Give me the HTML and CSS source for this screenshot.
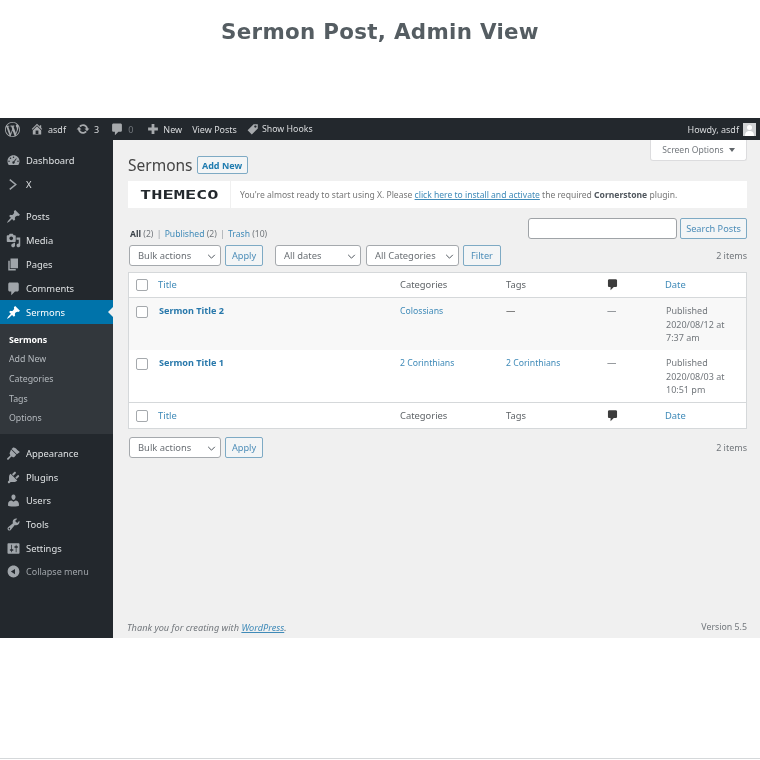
FILE: index.html
```html
<!DOCTYPE html>
<html lang="en">
<head>
<meta charset="utf-8">
<title>Sermon Post, Admin View</title>
<link rel="stylesheet" href="styles.css">
</head>
<body>
<h1 class="heading">Sermon Post, Admin View</h1>
<div class="shot">
  <header class="adminbar">
    <svg class="ab-wp" viewBox="0 0 20 20"><path fill-rule="evenodd" d="M20 10c0-5.510-4.490-10-10-10C4.480 0 0 4.490 0 10c0 5.520 4.480 10 10 10 5.510 0 10-4.480 10-10zM7.780 15.370L4.370 6.220c.55-.02 1.170-.08 1.170-.08.5-.06.44-1.130-.06-1.110 0 0-1.450.11-2.370.11-.18 0-.37 0-.58-.01C4.120 2.690 6.870 1.070 10 1.070c2.330 0 4.450.87 6.050 2.340-.68-.11-1.650.39-1.650 1.580 0 .74.45 1.360.9 2.100.35.61.55 1.360.55 2.460 0 1.490-1.400 5-1.400 5l-3.030-8.370c.54-.02.82-.17.82-.17.5-.05.44-1.250-.06-1.220 0 0-1.440.12-2.380.12-.87 0-2.330-.12-2.330-.12-.5-.03-.56 1.200-.06 1.220l.92.080 1.260 3.410zM17.410 10c.24-.64.74-1.870.43-4.250.7 1.290 1.050 2.710 1.050 4.250 0 3.290-1.730 6.240-4.480 7.830 1-2.670 2-5.390 3-7.830zM6.100 18.090C3.120 16.650 1.110 13.530 1.110 10c0-1.300.23-2.480.72-3.590C3.250 10.300 4.670 14.200 6.100 18.090zm4.030-6.630l2.580 6.980c-.86.290-1.740.450-2.710.450-.82 0-1.620-.12-2.370-.35.84-2.380 1.670-4.750 2.500-7.080z"/></svg>
    <span class="ab-item"><svg class="ab-ico" viewBox="0 0 20 20"><path fill-rule="evenodd" d="M16 8.500l1.530 1.530-1.060 1.060L10 4.620l-6.470 6.470-1.060-1.060L10 2.500l4 4v-2h2v4zm-6-2.460l6 5.990V18H4v-5.970zM12 17v-5H8v5h4z"/></svg>asdf</span>
    <span class="ab-item ab-updates"><svg class="ab-ico" viewBox="0 0 20 20"><path d="M10.200 3.280c3.530 0 6.430 2.610 6.900 6h2.080l-3.500 4-3.500-4h2.320c-.45-1.970-2.210-3.440-4.300-3.440-1.450 0-2.730.71-3.540 1.790L4.620 5.870C5.890 4.280 7.920 3.280 10.200 3.280zm-.4 13.440c-3.520 0-6.430-2.610-6.890-6H.82l3.500-4c1.170 1.330 2.330 2.670 3.500 4H5.500c.45 1.970 2.210 3.440 4.300 3.440 1.450 0 2.730-.71 3.540-1.790l1.990 1.980c-1.270 1.590-3.300 2.590-5.530 2.590z"/></svg>3</span>
    <span class="ab-item ab-dim"><svg class="ab-ico" viewBox="0 0 20 20"><path d="M5 2h10c1.100 0 2 .9 2 2v8c0 1.100-.9 2-2 2h-3l-5 5v-5H5c-1.100 0-2-.9-2-2V4c0-1.100.9-2 2-2z"/></svg>0</span>
    <span class="ab-item ab-new"><svg class="ab-ico" viewBox="0 0 20 20"><path d="M17 8v4h-5v5H8v-5H3V8h5V3h4v5h5z"/></svg>New</span>
    <span class="ab-item ab-view">View Posts</span>
    <span class="ab-item ab-hooks"><svg class="ab-ico" viewBox="0 0 20 20"><path fill-rule="evenodd" d="M11 2h7v7L8 19l-7-7zm3 6c1.100 0 2-.9 2-2s-.9-2-2-2-2 .9-2 2 .9 2 2 2z"/></svg>Show Hooks</span>
    <span class="ab-right">Howdy, asdf<span class="avatar"><svg viewBox="0 0 13 13"><circle cx="6.500" cy="4.500" r="2.500"/><path d="M2 13c0-4 2-5 4.500-5S11 9 11 13z"/></svg></span></span>
  </header>
  <div class="wrap">
    <nav class="menu">
      <a class="mi"><svg class="mi-ico" viewBox="0 0 20 20"><path fill-rule="evenodd" d="M3.760 16h12.480c1.100-1.430 1.760-3.210 1.760-5.140C18 6.200 14.420 3 10 3s-8 3.200-8 7.860c0 1.930.66 3.710 1.760 5.140zM10 4.500a1 1 0 1 1 0 2 1 1 0 0 1 0-2zM6 6a1 1 0 1 1 0 2 1 1 0 0 1 0-2zm7.500 1l.8.6-2.900 4.200a1.600 1.600 0 1 1-1-.7zM4 10a1 1 0 1 1 0 2 1 1 0 0 1 0-2zm12 0a1 1 0 1 1 0 2 1 1 0 0 1 0-2z"/></svg>Dashboard</a>
      <a class="mi"><svg class="mi-ico" viewBox="0 0 20 20"><path class="mi-chevron" d="M5 3.500l8 6.500-8 6.500"/></svg>X</a>
      <a class="mi sep"><svg class="mi-ico" viewBox="0 0 20 20"><path d="M10.440 3.020l1.820-1.820 6.360 6.350-1.830 1.820c-1.050-.68-2.480-.57-3.410.36l-.75.75c-.92.93-1.040 2.350-.35 3.410l-1.830 1.820-2.410-2.410-2.800 2.790c-.42.42-3.380 2.710-3.800 2.290s1.860-3.390 2.280-3.810l2.790-2.790L4.100 9.360l1.830-1.820c1.050.69 2.480.57 3.400-.36l.75-.75c.93-.92 1.050-2.350.36-3.410z"/></svg>Posts</a>
      <a class="mi"><svg class="mi-ico" viewBox="0 0 20 20"><path fill-rule="evenodd" d="M13 11V4c0-.55-.45-1-1-1h-1.670L9 1H5L3.670 3H2c-.55 0-1 .45-1 1v7c0 .55.45 1 1 1h10c.55 0 1-.45 1-1zM7 4.500c1.380 0 2.500 1.120 2.500 2.500S8.380 9.500 7 9.500 4.500 8.380 4.500 7 5.620 4.500 7 4.500zM14 6h5v10.500c0 1.380-1.120 2.500-2.500 2.500S14 17.880 14 16.500s1.120-2.500 2.500-2.500c.17 0 .34.020.5.050V9h-3V6zm-4 8.050V13h2v3.500c0 1.380-1.120 2.500-2.500 2.500S7 17.880 7 16.500 8.120 14 9.500 14c.17 0 .34.020.5.050z"/></svg>Media</a>
      <a class="mi"><svg class="mi-ico" viewBox="0 0 20 20"><path d="M6 15V2h10v13H6zm-1 1h8v2H3V5h2v11z"/></svg>Pages</a>
      <a class="mi"><svg class="mi-ico" viewBox="0 0 20 20"><path d="M5 2h10c1.100 0 2 .9 2 2v8c0 1.100-.9 2-2 2h-3l-5 5v-5H5c-1.100 0-2-.9-2-2V4c0-1.100.9-2 2-2z"/></svg>Comments</a>
      <a class="mi current"><svg class="mi-ico" viewBox="0 0 20 20"><path d="M10.440 3.020l1.820-1.820 6.360 6.350-1.830 1.820c-1.050-.68-2.480-.57-3.410.36l-.75.75c-.92.93-1.040 2.350-.35 3.410l-1.830 1.820-2.410-2.410-2.800 2.790c-.42.42-3.380 2.710-3.800 2.290s1.860-3.390 2.280-3.810l2.790-2.790L4.100 9.360l1.830-1.820c1.050.69 2.480.57 3.400-.36l.75-.75c.93-.92 1.050-2.350.36-3.410z"/></svg>Sermons</a>
      <div class="submenu">
        <a class="sub on">Sermons</a>
        <a class="sub">Add New</a>
        <a class="sub">Categories</a>
        <a class="sub">Tags</a>
        <a class="sub">Options</a>
      </div>
      <a class="mi"><svg class="mi-ico" viewBox="0 0 20 20"><path d="M14.500 11L7.400 4l1.500-1.500c.5-.6 2.300-.5 3.500.3 1.200.8 1.400 1.300 2.700 2.500 1.200 1.200 2.200 1.800 3.400 2.800zM6.700 4.700l7.100 7.100-2.700 2.700c-.7.700-1.900.4-2.900-.3-.6-.4-1-.3-1.700.5l-3 3.300c-.5.500-1.300.5-1.800 0s-.5-1.300 0-1.800l3.300-3c.8-.7.900-1.100.5-1.700-.7-1-1-2.200-.3-2.900z"/></svg>Appearance</a>
      <a class="mi"><svg class="mi-ico" viewBox="0 0 20 20"><path d="M13.110 4.360L9.870 7.600 8 5.730l3.240-3.240c.35-.34 1.050-.2 1.560.32.52.51.66 1.210.31 1.550zm-8 1.770l.91-1.120 9.010 9.010-1.190.84c-.71.71-2.630 1.160-3.820 1.160H6.140L4.900 17.260c-.59.59-1.540.59-2.120 0-.59-.58-.59-1.530 0-2.120l1.240-1.240v-3.880c0-1.130.4-3.190 1.090-3.890zm7.260 3.970l3.240-3.240c.34-.35 1.040-.21 1.550.31.52.51.66 1.210.31 1.550l-3.240 3.250z"/></svg>Plugins</a>
      <a class="mi"><svg class="mi-ico" viewBox="0 0 20 20"><path d="M10 9.250c-2.270 0-2.730-3.440-2.730-3.440C7 4.020 7.820 2 9.970 2c2.160 0 2.980 2.020 2.710 3.810 0 0-.41 3.440-2.680 3.440zm0 2.570L12.720 10c2.390 0 4.520 2.330 4.520 4.530v2.490s-3.650 1.130-7.240 1.130c-3.650 0-7.240-1.130-7.240-1.130v-2.490c0-2.250 1.940-4.480 4.470-4.480z"/></svg>Users</a>
      <a class="mi"><svg class="mi-ico" viewBox="0 0 20 20"><path fill-rule="evenodd" d="M16.680 9.770c-1.340 1.340-3.300 1.670-4.950.99l-5.410 6.520c-.99.99-2.590.99-3.570 0-.99-.98-.99-2.580 0-3.570l6.520-5.420c-.68-1.650-.35-3.610.99-4.950 1.280-1.280 3.120-1.620 4.720-1.060l-2.890 2.890 2.820 2.820 2.860-2.860c.53 1.580.18 3.390-1.090 4.640zM3.810 16.210c.4.390 1.030.39 1.420 0 .4-.4.4-1.030 0-1.420-.39-.39-1.020-.39-1.420 0-.39.39-.39 1.020 0 1.420z"/></svg>Tools</a>
      <a class="mi"><svg class="mi-ico" viewBox="0 0 20 20"><path fill-rule="evenodd" d="M18 16V4c0-.55-.45-1-1-1H3c-.55 0-1 .45-1 1v12c0 .55.45 1 1 1h14c.55 0 1-.45 1-1zM8 11h1c.55 0 1 .45 1 1s-.45 1-1 1H8v1.500c0 .28-.22.5-.5.5s-.5-.22-.5-.5V13H6c-.55 0-1-.45-1-1s.45-1 1-1h1V5.500c0-.28.22-.5.5-.5s.5.22.5.5V11zm5-2h-1c-.55 0-1-.45-1-1s.45-1 1-1h1V5.500c0-.28.22-.5.5-.5s.5.22.5.5V7h1c.55 0 1 .45 1 1s-.45 1-1 1h-1v5.500c0 .28-.22.5-.5.5s-.5-.22-.5-.5V9z"/></svg>Settings</a>
      <a class="mi collapse"><svg class="mi-ico" viewBox="0 0 20 20"><path fill-rule="evenodd" d="M10 2.160c4.330 0 7.840 3.510 7.840 7.840s-3.510 7.840-7.840 7.840S2.160 14.330 2.160 10 5.670 2.160 10 2.160zm2 4.340L6.500 10l5.500 3.500z"/></svg>Collapse menu</a>
    </nav>
    <main class="content">
      <div class="screen-opts-row"><span class="screen-opts">Screen Options<span class="caret"></span></span></div>
      <div class="title-row"><span class="page-title">Sermons</span><span class="btn add-new">Add New</span></div>
      <div class="notice">
        <div class="notice-logo"><span class="logo-text">THEMECO</span></div>
        <p class="notice-text">You're almost ready to start using X. Please <a class="link u">click here to install and activate</a> the required <b>Cornerstone</b> plugin.</p>
      </div>
      <div class="subsub-row">
        <div class="subsub"><b>All</b> (2) <i>|</i> <a class="link">Published</a> (2) <i>|</i> <a class="link">Trash</a> (10)</div>
        <div class="search"><span class="search-input"></span><span class="btn search-btn">Search Posts</span></div>
      </div>
      <div class="tablenav">
        <span class="select w92">Bulk actions<svg class="chev" viewBox="0 0 10 6"><path d="M1 1l4 4 4-4"/></svg></span>
        <span class="btn apply">Apply</span>
        <span class="select w86 gap-l">All dates<svg class="chev" viewBox="0 0 10 6"><path d="M1 1l4 4 4-4"/></svg></span>
        <span class="select w93">All Categories<svg class="chev" viewBox="0 0 10 6"><path d="M1 1l4 4 4-4"/></svg></span>
        <span class="btn apply">Filter</span>
        <span class="items">2 items</span>
      </div>
      <div class="table">
        <div class="row head">
          <span class="cb"></span><a class="c-title link">Title</a><span class="c-cat">Categories</span><span class="c-tag">Tags</span>
          <span class="c-com"><svg class="bubble" viewBox="0 0 20 20"><path d="M5 2h10c1.100 0 2 .9 2 2v8c0 1.100-.9 2-2 2h-3l-5 5v-5H5c-1.100 0-2-.9-2-2V4c0-1.100.9-2 2-2z"/></svg></span><a class="c-date link">Date</a>
        </div>
        <div class="row post alt">
          <span class="cb"></span><a class="c-title strong">Sermon Title 2</a><a class="c-cat link cell-link">Colossians</a><span class="c-tag">—</span><span class="c-com">—</span>
          <span class="c-date muted">Published<br>2020/08/12 at<br>7:37 am</span>
        </div>
        <div class="row post">
          <span class="cb"></span><a class="c-title strong">Sermon Title 1</a><a class="c-cat link cell-link">2 Corinthians</a><a class="c-tag link cell-link">2 Corinthians</a><span class="c-com">—</span>
          <span class="c-date muted">Published<br>2020/08/03 at<br>10:51 pm</span>
        </div>
        <div class="row head foot">
          <span class="cb"></span><a class="c-title link">Title</a><span class="c-cat">Categories</span><span class="c-tag">Tags</span>
          <span class="c-com"><svg class="bubble" viewBox="0 0 20 20"><path d="M5 2h10c1.100 0 2 .9 2 2v8c0 1.100-.9 2-2 2h-3l-5 5v-5H5c-1.100 0-2-.9-2-2V4c0-1.100.9-2 2-2z"/></svg></span><a class="c-date link">Date</a>
        </div>
      </div>
      <div class="tablenav bottom">
        <span class="select w92">Bulk actions<svg class="chev" viewBox="0 0 10 6"><path d="M1 1l4 4 4-4"/></svg></span>
        <span class="btn apply">Apply</span>
        <span class="items">2 items</span>
      </div>
      <footer class="foot-bar"><em class="thanks">Thank you for creating with <a class="link u">WordPress</a>.</em><span>Version 5.5</span></footer>
    </main>
  </div>
</div>
<div class="page-rule"></div>
</body>
</html>
```

FILE: styles.css
```css
* { box-sizing: border-box; }
html, body { margin: 0; padding: 0; }
body { width: 760px; height: 760px; background: #fff; font-family: "Noto Sans", sans-serif; font-size: 9.4px; color: #555; overflow: hidden; position: relative; }
a { text-decoration: none; }
.heading { margin: 0; height: 118px; padding-top: 16px; text-align: center; font: bold 21.4px/32px "DejaVu Sans", sans-serif; letter-spacing: 0.3px; color: #555d62; filter: blur(.3px); }
.shot { height: 520px; display: flex; flex-direction: column; background: #f0f0f0; filter: blur(.4px); }
.adminbar { height: 22px; background: #23282d; color: #d9dbdd; display: flex; align-items: center; padding: 0 4px 0 5px; font-size: 9px; }
.ab-wp { width: 15px; height: 15px; margin-right: 10px; fill: #a7aaad; }
.ab-item { display: flex; align-items: center; margin-right: 10px; white-space: nowrap; }
.ab-dim { color: #72777c; margin-right: 13px; }
.ab-ico { width: 14px; height: 14px; fill: #a7aaad; margin-right: 4px; }
.ab-updates { margin-right: 11px; }
.ab-new .ab-ico { margin-right: 3px; }
.ab-view { margin-right: 10px; }
.ab-hooks { font-size: 8.8px; }
.ab-hooks .ab-ico { width: 12px; height: 12px; margin-right: 3px; }
.ab-right { margin-left: auto; display: flex; align-items: center; gap: 4px; }
.avatar { width: 13px; height: 13px; background: #d0d2d4; display: block; }
.avatar svg { display: block; fill: #fff; }
.wrap { flex: 1; display: flex; min-height: 0; }
.menu { width: 113px; background: #23282d; padding-top: 9px; flex: none; }
.mi { display: flex; align-items: center; height: 23.9px; padding-left: 6px; color: #dde0e2; white-space: nowrap; }
.mi-ico { width: 15px; height: 15px; fill: #a0a5aa; margin-right: 5px; flex: none; }
.mi-chevron { fill: none; stroke: #a0a5aa; stroke-width: 2; }
.mi.sep { margin-top: 8px; }
.mi.current { background: #0073aa; color: #fff; position: relative; }
.mi.current .mi-ico { fill: #fff; }
.mi.current::after { content: ""; position: absolute; right: 0; top: 7px; border: 5px solid transparent; border-right-color: #f0f0f0; border-left-width: 0; }
.submenu { background: #32373c; padding: 6.5px 0 5px; margin-bottom: 7.5px; }
.sub { display: block; height: 19.6px; line-height: 19.6px; padding-left: 9px; font-size: 8.8px; color: #b4b9be; }
.sub.on { color: #fff; font-weight: 700; }
.mi.collapse { color: #a0a5aa; font-size: 9px; height: 22px; }
.content { flex: 1; min-width: 0; padding: 0 13px 0 15px; display: flex; flex-direction: column; position: relative; }
.screen-opts-row { display: flex; justify-content: flex-end; height: 0; }
.screen-opts { height: 21px; width: 97px; flex: none; background: #fff; border: 1px solid #dcdcde; border-top: 0; border-radius: 0 0 3px 3px; color: #72777c; font-size: 8.6px; display: flex; align-items: center; justify-content: center; gap: 5px; }
.caret { border: 3.5px solid transparent; border-top: 4px solid #60656a; border-bottom: 0; }
.title-row { display: flex; align-items: center; gap: 4px; height: 24px; margin-top: 13px; }
.page-title { font-size: 15.5px; color: #444; }
.btn { display: inline-flex; align-items: center; justify-content: center; height: 21px; padding: 0 6px; border: 1px solid #7eaac4; border-radius: 2px; background: #f3f5f6; color: #4c8db8; font-size: 9.2px; white-space: nowrap; }
.add-new { height: 18px; font-weight: 700; color: #1f7cb0; width: 51px; padding: 0; font-size: 9px; }
.notice { display: flex; height: 27px; margin-top: 4px; background: #fff; align-items: center; }
.notice-logo { width: 103px; height: 100%; display: flex; align-items: center; justify-content: center; border-right: 1px solid #f0f0f0; flex: none; }
.logo-text { display: inline-block; font: bold 12px/1 "DejaVu Sans Mono", monospace; color: #23282d; transform: scaleX(1.55); }
.notice-text { margin: 0; padding-left: 9px; color: #777; font-size: 8.55px; white-space: nowrap; }
.notice-text b { color: #50575e; font-weight: 700; }
.link { color: #3f8ab8; }
.link.u { text-decoration: underline; }
.subsub-row { display: flex; justify-content: space-between; align-items: center; margin-top: 10px; height: 21px; }
.subsub { color: #72777c; font-size: 8.6px; padding: 10px 0 0 2px; }
.subsub b { color: #3c434a; }
.subsub i { font-style: normal; color: #9aa0a5; margin: 0 1px; }
.search { display: flex; gap: 3px; }
.search-input { width: 149px; height: 21px; background: #fff; border: 1px solid #9fa3a7; border-radius: 3px; }
.search-btn { width: 67px; padding: 0; }
.tablenav { display: flex; align-items: center; height: 22px; margin-top: 5px; padding-left: 1px; }
.select { position: relative; display: flex; align-items: center; height: 21px; padding-left: 8px; background: #fff; border: 1px solid #a5a9ad; border-radius: 3px; color: #6a6f74; font-size: 9.4px; margin-right: 4px; }
.w92 { width: 92px; }
.w86 { width: 86px; margin-right: 5px; }
.w93 { width: 93px; }
.gap-l { margin-left: 12px; }
.chev { position: absolute; right: 4px; top: 8px; width: 9px; height: 5px; fill: none; stroke: #50575e; stroke-width: 1.2; }
.apply { width: 38px; padding: 0; }
.items { margin-left: auto; color: #72777c; font-size: 9px; }
.table { margin-top: 6px; background: #fff; border: 1px solid #d5d8da; display: flex; flex-direction: column; }
.row { display: grid; grid-template-columns: 29px 242px 106px 101px 58px 1fr; }
.head { height: 25px; align-items: center; border-bottom: 1px solid #d5d8da; color: #5f6468; padding-bottom: 1px; }
.foot { height: 26px; border-bottom: 0; border-top: 1px solid #d5d8da; padding-bottom: 0; }
.post { height: 52px; padding-top: 6px; line-height: 13.5px; }
.alt { background: #f8f8f8; }
.cb { width: 12px; height: 12px; margin-left: 7px; background: #fff; border: 1px solid #a5a9ad; border-radius: 2px; }
.post .cb { margin-top: 2px; }
.strong { color: #2878ab; font-weight: 700; padding-left: 1px; font-size: 9.1px; }
.cell-link { font-size: 8.7px; padding-top: 1px; }
.muted { color: #72777c; font-size: 9px; padding-left: 1px; }
.c-com { color: #72777c; }
.bubble { width: 13px; height: 13px; fill: #3c3c3c; display: block; margin-left: -1px; }
.bottom { margin-top: 7px; }
.foot-bar { margin-top: auto; height: 17px; margin-left: -1px; display: flex; justify-content: space-between; align-items: flex-start; color: #72777c; font-size: 8.8px; }
.thanks { font-size: 9.2px; }
.page-rule { position: absolute; left: 0; right: 0; top: 758px; height: 1px; background: #d5d8da; }
```
